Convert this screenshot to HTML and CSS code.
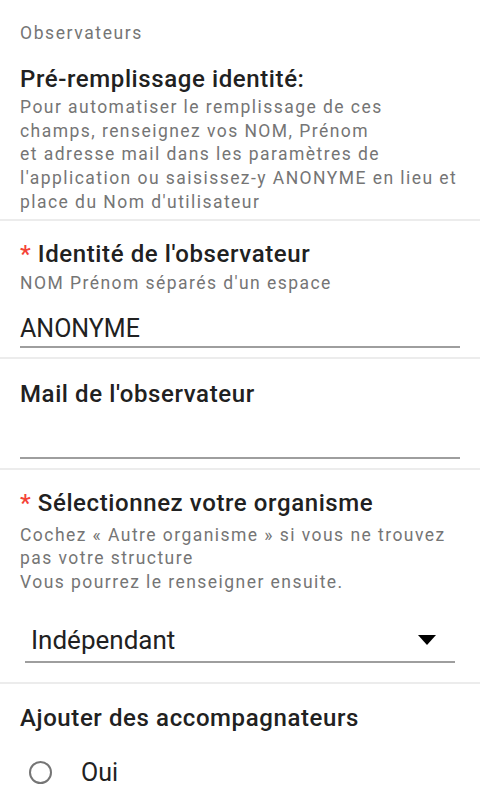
FILE: index.html
```html
<!DOCTYPE html>
<html lang="fr">
<head>
<meta charset="utf-8">
<title>Observateurs</title>
<link rel="stylesheet" href="styles.css">
</head>
<body>
<main class="form">
  <section class="block block-intro">
    <div class="group-label">Observateurs</div>
    <h2 class="title title-intro">Pré-remplissage identité:</h2>
    <p class="hint hint-intro">Pour automatiser le remplissage de ces<br>champs, renseignez vos NOM, Prénom<br>et adresse mail dans les paramètres de<br>l'application ou saisissez-y ANONYME en lieu et<br>place du Nom d'utilisateur</p>
  </section>
  <div class="sep"></div>
  <section class="block block-identity">
    <h2 class="title"><span class="req">*</span> Identité de l'observateur</h2>
    <p class="hint hint-short">NOM Prénom séparés d'un espace</p>
    <div class="input input-identity">ANONYME</div>
  </section>
  <div class="sep"></div>
  <section class="block block-mail">
    <h2 class="title">Mail de l'observateur</h2>
    <div class="input input-mail">&nbsp;</div>
  </section>
  <div class="sep"></div>
  <section class="block block-org">
    <h2 class="title"><span class="req">*</span> Sélectionnez votre organisme</h2>
    <p class="hint hint-org">Cochez « Autre organisme » si vous ne trouvez<br>pas votre structure<br>Vous pourrez le renseigner ensuite.</p>
    <div class="select">
      <span class="select-value">Indépendant</span>
      <svg class="select-arrow" width="18" height="10" viewBox="0 0 18 10"><path d="M0 0 L18 0 L9 10 Z" fill="#000"/></svg>
    </div>
  </section>
  <div class="sep"></div>
  <section class="block block-companions">
    <h2 class="title">Ajouter des accompagnateurs</h2>
    <div class="radio-row">
      <span class="radio"></span>
      <span class="radio-label">Oui</span>
    </div>
  </section>
</main>
</body>
</html>
```
FILE: styles.css
```css
html, body {
  margin: 0;
  padding: 0;
  background: #ffffff;
}
body {
  font-family: Roboto, "Noto Sans", "Liberation Sans", sans-serif;
  color: #212121;
  width: 480px;
  height: 794px;
  overflow: hidden;
}
.form {
  display: flex;
  flex-direction: column;
}
.block {
  padding: 0 20px;
  display: flex;
  flex-direction: column;
}
.sep {
  height: 2px;
  background: #ececec;
}
.group-label {
  font-size: 17.5px;
  line-height: 24px;
  letter-spacing: 1.6px;
  color: #757575;
  padding-top: 21px;
}
.title {
  margin: 0;
  font-size: 24px;
  line-height: 30px;
  font-weight: 500;
  letter-spacing: 0.6px;
  color: #212121;
}
.title-intro {
  margin-top: 19px;
}
.req {
  color: #f44336;
}
.hint {
  margin: 0;
  font-size: 17.5px;
  line-height: 23.7px;
  letter-spacing: 1.45px;
  color: #757575;
  white-space: nowrap;
}
.hint-intro {
  margin-top: 2px;
  padding-bottom: 4px;
}
.block-identity {
  padding-top: 18px;
}
.hint-short {
  margin-top: 3.5px;
}
.input {
  font-size: 25px;
  line-height: 32px;
  color: #212121;
  border-bottom: 2px solid #9e9e9e;
  padding-bottom: 1px;
  margin-bottom: 9px;
}
.input-identity {
  margin-top: 17.5px;
}
.block-mail {
  padding-top: 20px;
}
.input-mail {
  margin-top: 15px;
}
.block-org {
  padding-top: 18px;
}
.hint-org {
  margin-top: 5.5px;
}
.select {
  margin: 29px 5px 19px;
  padding: 0 19px 5px 6px;
  border-bottom: 2px solid #9e9e9e;
  display: flex;
  align-items: center;
  justify-content: space-between;
}
.select-value {
  font-size: 26px;
  line-height: 32px;
  color: #212121;
}
.select-arrow {
  display: block;
}
.block-companions {
  padding-top: 19px;
}
.radio-row {
  display: flex;
  align-items: center;
  margin-top: 24px;
  padding-left: 9px;
}
.radio {
  width: 19px;
  height: 19px;
  border: 2.5px solid #757575;
  border-radius: 50%;
  flex: none;
}
.radio-label {
  margin-left: 29px;
  font-size: 25px;
  line-height: 32px;
  color: #212121;
}
```
